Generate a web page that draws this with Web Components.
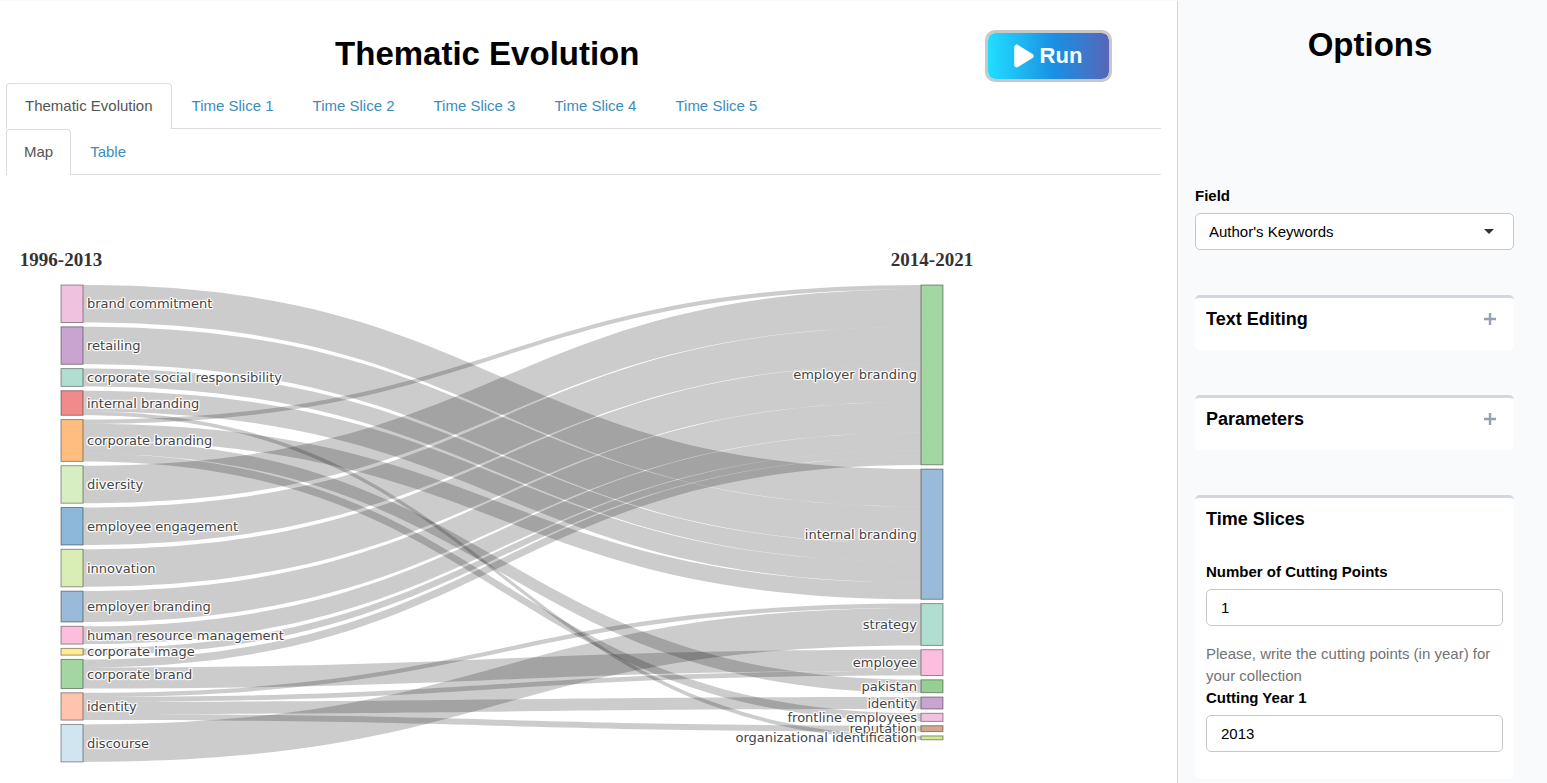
<!DOCTYPE html>
<html lang="en">
<head>
<meta charset="utf-8">
<meta name="viewport" content="width=device-width, initial-scale=1">
<title>Thematic Evolution</title>
<style>
  body { margin: 0; background: #fff; color: #000; font: 15px/22px "Liberation Sans", Arial, sans-serif; }
</style>
</head>
<body>
<app-shell>
  <page-header slot="main">
    Thematic Evolution
    <run-button slot="action">Run</run-button>
  </page-header>
  <tab-bar slot="main" items="Thematic Evolution|Time Slice 1|Time Slice 2|Time Slice 3|Time Slice 4|Time Slice 5"></tab-bar>
  <tab-bar slot="main" class="sub" items="Map|Table"></tab-bar>
  <sankey-chart slot="main"></sankey-chart>

  <options-panel slot="side" heading="Options">
    <select-field label="Field" options="Author's Keywords|Keywords Plus|Titles|Abstracts"></select-field>
    <option-box heading="Text Editing" collapsed></option-box>
    <option-box heading="Parameters" collapsed></option-box>
    <option-box heading="Time Slices">
      <number-field label="Number of Cutting Points" value="1"></number-field>
      <help-text>Please, write the cutting points (in year) for your collection</help-text>
      <number-field label="Cutting Year 1" value="2013"></number-field>
    </option-box>
  </options-panel>
</app-shell>

<script>
class BaseElement extends HTMLElement {
  connectedCallback() {
    if (!this.shadowRoot) this.attachShadow({ mode: "open" }).innerHTML = this.view();
  }
  list(name) { return (this.getAttribute(name) || "").split("|"); }
}

customElements.define("app-shell", class extends BaseElement {
  view() {
    return `<style>
      :host { display: grid; grid-template-columns: minmax(0, 1fr) 370px; min-height: 100vh; box-sizing: border-box; border-top: 1px solid #f8f9fa; }
      main { padding: 0 16px 0 6px; }
      aside { background: #f9fafc; border-left: 1px solid #d2d6de; padding-left: 17px; }
    </style>
    <main><slot name="main"></slot></main>
    <aside><slot name="side"></slot></aside>`;
  }
});

customElements.define("page-header", class extends BaseElement {
  view() {
    return `<style>
      :host { display: grid; grid-template-columns: 10fr 2fr; height: 82px; }
      h1 { margin: 0; padding-top: 33px; font-size: 33px; line-height: 40px; text-align: center; }
      .action { padding: 29px 0 0 16px; }
    </style>
    <h1><slot></slot></h1>
    <div class="action"><slot name="action"></slot></div>`;
  }
});

customElements.define("run-button", class extends BaseElement {
  view() {
    return `<style>
      :host { display: block; }
      button { display: flex; align-items: center; justify-content: center; gap: 6px; width: 127px; height: 52px; box-sizing: border-box;
        border: 3px solid #c8c8c8; border-radius: 10px; padding: 0; cursor: pointer; color: #fff;
        background: linear-gradient(90deg, #21deff 0%, #1a8fe3 55%, #5866b8 100%) padding-box;
        font: bold 22px/28px "Liberation Sans", Arial, sans-serif; }
      svg { width: 20px; height: 26px; display: block; }
    </style>
    <button type="button">
      <svg viewBox="0 0 384 512" aria-hidden="true"><path fill="#fff" d="M73 39c-14.800-9.100-33.400-9.400-48.500-.9S0 62.600 0 80V432c0 17.400 9.400 33.400 24.500 41.900s33.700 8.100 48.500-.9L361 297c14.300-8.700 23-24.200 23-41s-8.700-32.200-23-41L73 39z"/></svg>
      <slot></slot>
    </button>`;
  }
});

customElements.define("tab-bar", class extends BaseElement {
  view() {
    return `<style>
      :host { display: block; --tab-pad: 18px; }
      :host(.sub) { --tab-pad: 17px; }
      ul { display: flex; gap: 1px; margin: 0; padding: 0; list-style: none; border-bottom: 1px solid #ddd; }
      li { margin-bottom: -1px; }
      a { display: block; padding: 11px var(--tab-pad) 12px; border: 1px solid transparent; border-bottom: 0; border-radius: 4px 4px 0 0;
        color: #3c8dbc; text-decoration: none; line-height: 22px; white-space: nowrap; }
      a[aria-current] { color: #555; background: #fff; border-color: #ddd; }
    </style>
    <nav><ul>${this.list("items").map((t, i) =>
      `<li><a href="#"${i === 0 ? ' aria-current="page"' : ""}>${t}</a></li>`).join("")}</ul></nav>`;
  }
});

/* Flow diagram: keywords of the first period on the left, of the second on the right. */
const GAP = 4.3;
const TOP = 285;
const SOURCES = [
  ["brand commitment", 37.5, "#f1c2e0"],
  ["retailing", 37.5, "#c9a4d0"],
  ["corporate social responsibility", 17.8, "#b0dfd2"],
  ["internal branding", 24.6, "#f18b8b"],
  ["corporate branding", 41.8, "#ffbe80"],
  ["diversity", 37.5, "#d7eec2"],
  ["employee engagement", 37.5, "#8db8d9"],
  ["innovation", 37.5, "#d9edb5"],
  ["employer branding", 30.9, "#99bbd9"],
  ["human resource management", 17.8, "#fbbedd"],
  ["corporate image", 6.7, "#ffeb94"],
  ["corporate brand", 29.1, "#a4d6a4"],
  ["identity", 27.3, "#ffc4ae"],
  ["discourse", 37.5, "#d1e5f0"]
];
const TARGETS = [
  ["employer branding", 179.8, "#a4d6a4"],
  ["internal branding", 130.2, "#99bbd9"],
  ["strategy", 41.8, "#b0dfd2"],
  ["employee", 25.8, "#fbbedd"],
  ["pakistan", 12.9, "#96cf91"],
  ["identity", 12, "#c9a4d0"],
  ["frontline employees", 8.1, "#f1c2e0"],
  ["reputation", 5.9, "#d2a78f"],
  ["organizational identification", 3.9, "#d1e896"]
];
/* source index, target index, value */
const FLOWS = [
  [0, 1, 37.5], [1, 1, 37.5], [2, 1, 17.8],
  [3, 1, 20.7], [3, 8, 3.9],
  [4, 0, 4.2], [4, 1, 16.7], [4, 4, 12.9], [4, 6, 8],
  [5, 0, 37.5], [6, 0, 37.5], [7, 0, 37.5], [8, 0, 30.9], [9, 0, 17.8], [10, 0, 6.7],
  [11, 0, 8], [11, 3, 21.1],
  [12, 2, 4.3], [12, 3, 4.8], [12, 5, 12.1], [12, 7, 5.9],
  [13, 2, 37.5]
];

customElements.define("sankey-chart", class extends BaseElement {
  place(rows) {
    let y = TOP;
    return rows.map(([name, size, color]) => {
      const node = { name, size, color, y, next: y };
      y += size + GAP;
      return node;
    });
  }
  view() {
    const from = this.place(SOURCES), to = this.place(TARGETS);
    const x0 = 83, x1 = 921, mid = (x0 + x1) / 2;
    const links = FLOWS.map(([s, t, v]) => {
      const a = from[s].next, b = to[t].next;
      from[s].next += v;
      to[t].next += v;
      return `<path d="M${x0},${a}C${mid},${a} ${mid},${b} ${x1},${b}L${x1},${b + v}C${mid},${b + v} ${mid},${a + v} ${x0},${a + v}Z"/>`;
    }).join("");
    const box = (n, x) => `<rect x="${x}" y="${n.y}" width="22" height="${n.size}" fill="${n.color}"/>`;
    const label = (n, x) => `<text x="${x}" y="${Math.floor(n.y + n.size / 2 + .06) + 5}">${n.name}</text>`;
    return `<style>
      :host { display: block; }
      svg { display: block; width: 100%; height: auto; }
      .links { fill: #000; fill-opacity: .2; }
      .nodes { stroke: #000; stroke-opacity: .4; stroke-width: 1; }
      .labels { font: 13px "DejaVu Sans", Verdana, sans-serif; fill: #444;
        text-shadow: 1px 1px 1px #fff, -1px -1px 1px #fff, 1px -1px 1px #fff, -1px 1px 1px #fff, 0 1px 1px #fff, 1px 0 1px #fff, 0 -1px 1px #fff, -1px 0 1px #fff; }
      .periods { font: bold 19px "Liberation Serif", "Times New Roman", serif; fill: #333; text-anchor: middle; }
      .end { text-anchor: end; }
    </style>
    <svg viewBox="6 175 1155 600" role="img" aria-label="Thematic evolution map">
      <g class="links">${links}</g>
      <g class="nodes">${from.map(n => box(n, 61)).join("")}${to.map(n => box(n, 921)).join("")}</g>
      <g class="labels">${from.map(n => label(n, 87)).join("")}<g class="end">${to.map(n => label(n, 917)).join("")}</g></g>
      <g class="periods"><text x="61" y="266">1996-2013</text><text x="932" y="266">2014-2021</text></g>
    </svg>`;
  }
});

customElements.define("options-panel", class extends BaseElement {
  view() {
    return `<style>
      :host { display: block; }
      h2 { margin: 0 2px 0 0; padding: 24px 0 120px; font-size: 33px; line-height: 40px; text-align: center; }
      .fields { display: flex; flex-direction: column; gap: 45px; margin-right: 33px; }
    </style>
    <h2>${this.getAttribute("heading")}</h2>
    <div class="fields"><slot></slot></div>`;
  }
});

customElements.define("select-field", class extends BaseElement {
  view() {
    return `<style>
      :host { display: block; }
      label { display: block; margin-bottom: 6px; font-weight: bold; }
      .control { display: grid; align-items: center; }
      select, svg { grid-area: 1 / 1; }
      select { appearance: none; width: 100%; height: 37px; box-sizing: border-box; border: 1px solid #c8c8c8; border-radius: 5px; background: #fff;
        padding: 0 32px 0 13px; color: #000; font: 15px/22px "Liberation Sans", Arial, sans-serif; }
      svg { justify-self: end; width: 10px; height: 5px; margin-right: 20px; pointer-events: none; }
    </style>
    <label for="control">${this.getAttribute("label")}</label>
    <div class="control">
      <select id="control">${this.list("options").map(o => `<option>${o}</option>`).join("")}</select>
      <svg viewBox="0 0 10 5" aria-hidden="true"><path fill="#333" d="M0 0H10L5 5Z"/></svg>
    </div>`;
  }
});

customElements.define("option-box", class extends BaseElement {
  view() {
    const collapsed = this.hasAttribute("collapsed");
    return `<style>
      :host { display: block; background: #fff; border-top: 3px solid #d2d6de; border-radius: 5px; }
      header { display: flex; align-items: center; justify-content: space-between; padding: 10px 18px 20px 11px; }
      h3 { margin: 0; font-size: 18px; line-height: 22px; }
      button { border: 0; background: none; padding: 0; width: 12px; height: 12px; cursor: pointer; }
      svg { display: block; width: 12px; height: 12px; }
      .body { padding: 11px 11px 27px; }
    </style>
    <header><h3>${this.getAttribute("heading")}</h3>${collapsed
      ? `<button type="button" aria-label="Expand"><svg viewBox="0 0 12 12"><path d="M6 .5V11.500M.5 6H11.500" stroke="#97a0b3" stroke-width="2.400" stroke-linecap="round"/></svg></button>` : ""}</header>
    ${collapsed ? "" : `<div class="body"><slot></slot></div>`}`;
  }
});

customElements.define("number-field", class extends BaseElement {
  view() {
    return `<style>
      :host { display: block; }
      label { display: block; margin-bottom: 6px; font-weight: bold; }
      input { display: block; appearance: textfield; width: 100%; height: 37px; box-sizing: border-box; border: 1px solid #c8c8c8; border-radius: 5px; background: #fff;
        padding: 0 14px; color: #000; font: 15px/22px "Liberation Sans", Arial, sans-serif; }
      input::-webkit-inner-spin-button { appearance: none; margin: 0; }
    </style>
    <label for="control">${this.getAttribute("label")}</label>
    <input id="control" type="number" value="${this.getAttribute("value")}">`;
  }
});

customElements.define("help-text", class extends BaseElement {
  view() {
    return `<style>
      :host { display: block; padding-top: 17px; color: #737373; }
      p { margin: 0; }
    </style>
    <p><slot></slot></p>`;
  }
});
</script>
</body>
</html>
